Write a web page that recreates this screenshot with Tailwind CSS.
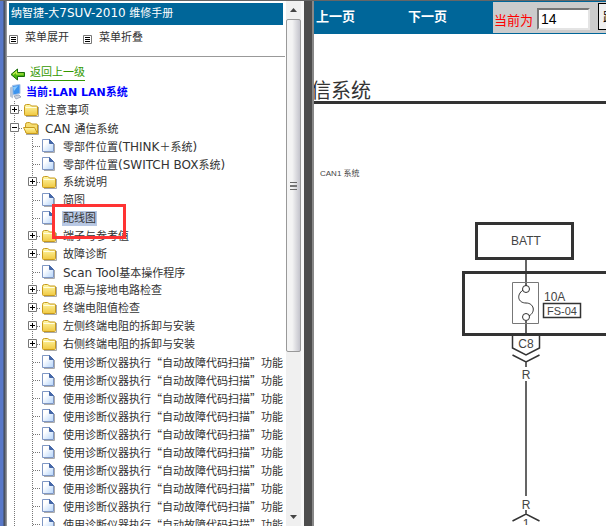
<!DOCTYPE html>
<html lang="zh-CN">
<head>
    <meta charset="UTF-8">
    <meta name="viewport" content="width=device-width, initial-scale=1.0">
    <title>维修手册</title>
    <script src="https://cdn.jsdelivr.net/npm/@tailwindcss/browser@4"></script>
</head>
<body class="bg-white text-[#333] font-['DejaVu_Sans','Noto_Sans_CJK_SC',sans-serif]">
    <!-- shared tree icons -->
    <svg width="0" height="0" class="absolute size-0">
        <defs>
            <linearGradient id="gold" x1="0" y1="0" x2="0" y2="1">
                <stop offset="0" stop-color="#fff8a8"/>
                <stop offset="1" stop-color="#f0c840"/>
            </linearGradient>
            <linearGradient id="paper" x1="0" y1="0" x2="1" y2="1">
                <stop offset="0.3" stop-color="#ffffff"/>
                <stop offset="1" stop-color="#b4d4fa"/>
            </linearGradient>
        </defs>
        <symbol id="folder" viewBox="0 0 18 18">
            <path d="M3 15.500h12.500V6" fill="none" stroke="#a9a9a9"/>
            <path d="M1.500 5.500q0-2 2-2h3q1 0 2 1.500h5q1 0 1 1v7.500q0 1-1 1h-11q-1 0-1-1z" fill="url(#gold)" stroke="#c79a1c"/>
            <path d="M2.500 6.500h11" stroke="#fffde0"/>
        </symbol>
        <symbol id="folder-open" viewBox="0 0 18 18">
            <path d="M3 15.500h12.500V6" fill="none" stroke="#a9a9a9"/>
            <path d="M2.500 13V5.500q0-2 2-2h2q1 0 2 1.500h5q1 0 1 1v8h-11z" fill="#f5dc70" stroke="#c79a1c"/>
            <path d="M0.500 8.500h11l3 6h-11z" fill="url(#gold)" stroke="#c79a1c"/>
        </symbol>
        <symbol id="page" viewBox="0 0 18 18">
            <path d="M3 15.500h10.500V7" fill="none" stroke="#aaa"/>
            <path d="M1.500 2.500h7l4 4v8h-11z" fill="url(#paper)" stroke="#7f97c4"/>
            <path d="M8.500 2.500v4h4z" fill="#4668a8" stroke="#4668a8"/>
        </symbol>
        <symbol id="line" viewBox="0 0 18 18">
            <path d="M9.500 0v18" stroke="#777" stroke-dasharray="1 1"/>
        </symbol>
        <symbol id="join" viewBox="0 0 18 18">
            <path d="M9.500 0v18M10 9.500h8" stroke="#777" stroke-dasharray="1 1"/>
        </symbol>
        <symbol id="plus" viewBox="0 0 18 18">
            <path d="M9.500 0v18M14 9.500h4" stroke="#777" stroke-dasharray="1 1"/>
            <path d="M5.500 4.500h8v8h-8z" fill="#fff" stroke="#777"/>
            <path d="M7 8.500h5M9.500 6v5" stroke="#000"/>
        </symbol>
        <symbol id="minus" viewBox="0 0 18 18">
            <path d="M9.500 0v18M14 9.500h4" stroke="#777" stroke-dasharray="1 1"/>
            <path d="M5.500 4.500h8v8h-8z" fill="#fff" stroke="#777"/>
            <path d="M7 8.500h5" stroke="#000"/>
        </symbol>
        <symbol id="list" viewBox="0 0 9 9">
            <path d="M.5.5h8v8h-8z" fill="#fff" stroke="#777"/>
            <path d="M2 2.500h5M2 4.500h5M2 6.500h5" stroke="#000"/>
        </symbol>
    </svg>

    <div class="flex h-screen overflow-hidden border-t border-[#666]">
        <div class="w-[7px] shrink-0 bg-linear-to-r from-[#5878c8] from-40% via-[#404858] via-60% to-[#aaa]"></div>

        <!-- contents frame -->
        <nav class="flex w-[297px] shrink-0">
            <div class="min-w-0 flex-1 overflow-hidden text-[11px] leading-[18px]">
                <h1 class="mt-[2px] mr-[3px] ml-[2px] h-[22px] bg-[#069] pl-[2px] leading-[21px] text-white">纳智捷<span class="text-[12px]">-</span>大<span class="text-[12px]">7SUV-2010</span> 维修手册</h1>
                <div class="mr-px flex h-[32px] gap-[14px] border-b border-[#999] pt-[4px] pl-[2px]">
                    <button class="flex h-[18px] items-center gap-[7px]"><svg class="mt-[3px] size-[9px]"><use href="#list"/></svg>菜单展开</button>
                    <button class="flex h-[18px] items-center gap-[7px]"><svg class="mt-[3px] size-[9px]"><use href="#list"/></svg>菜单折叠</button>
                </div>
                <div class="mt-[7px] flex h-[18px] items-center gap-[4px] pl-[3px]">
                    <svg class="mt-[3px] h-[13px] w-[16px]" viewBox="0 0 16 13">
                        <path d="M1 6.500 7.500 1v3.500h7v4h-7V12z" fill="#4db510" stroke="#176b08"/>
                        <path d="M3 6.500 6.500 3.500v2.500h7" fill="none" stroke="#c8f050" stroke-width="1.200"/>
                    </svg>
                    <a href="#" class="border-b border-[#390] leading-[15px] text-[#390]">返回上一级</a>
                </div>
                <div class="flex h-[19px] items-center gap-px pl-[2px]">
                    <svg class="size-[16px]" viewBox="0 0 16 16">
                        <path d="M1 3.500v9l3 2V2z" fill="#b8c4d4"/>
                        <path d="M3.500 1.500 11 .5v9L4 11z" fill="#3c94ee" stroke="#a9c3e6"/>
                        <path d="M4 3l5-1-4 5z" fill="#8cccfc"/>
                        <path d="M5 12l5-1 2 2-5 2z" fill="#ccd4e0" stroke="#8493ad" stroke-width=".7"/>
                    </svg>
                    <b class="pt-[2px] text-[#00f]">当前:LAN LAN系统</b>
                </div>
                <ul id="tree" class="-ml-[2px]"></ul>
            </div>
            <!-- scrollbar -->
            <div class="flex w-[15px] shrink-0 flex-col items-center bg-[#f0f0f0]">
                <svg class="h-[18px] w-[9px] shrink-0" viewBox="0 0 9 18"><path d="M1 11h7L4.500 7z" fill="#444"/></svg>
                <div class="flex h-[333px] w-full shrink-0 items-center justify-center rounded-xs border border-[#999] bg-linear-to-r from-[#f4f4f4] from-40% to-[#c4c4cc]">
                    <div class="h-[8px] w-[7px] border-y border-[#666] pt-[2px]"><div class="h-[2px] bg-[#777]"></div></div>
                </div>
                <svg class="mt-auto mb-[4px] h-[9px] w-[9px] shrink-0" viewBox="0 0 9 9"><path d="M1 2h7L4.500 6z" fill="#444"/></svg>
            </div>
            <div class="w-[3px] shrink-0 bg-[#f8f8f8]"></div>
        </nav>

        <div class="w-[10px] shrink-0 border-r-2 border-[#888] bg-[#4d4d4d]"></div>

        <!-- manual page frame -->
        <main class="min-w-0 flex-1 overflow-hidden">
            <div class="flex h-[33px] border-y border-[#069] bg-[#ccc] whitespace-nowrap">
                <div class="flex w-[179px] shrink-0 gap-[53px] bg-[#069] pl-[2px] text-[13px] leading-[30px] font-bold text-white">
                    <a href="#">上一页</a>
                    <a href="#">下一页</a>
                </div>
                <form class="flex shrink-0 items-start pl-px text-[13px]">
                    <label for="page-no" class="mr-[4px] pt-[9px] leading-[20px] text-[#f00]">当前为</label>
                    <input id="page-no" type="text" value="14" class="mt-[6px] h-[22px] w-[53px] border-2 border-t-[#777] border-r-[#e4e4e4] border-b-[#e4e4e4] border-l-[#777] bg-white pl-[2px] font-['Liberation_Sans',sans-serif] text-[14px] text-black">
                    <button type="button" class="mt-px ml-[8px] h-[27px] w-[36px] border border-black bg-[#f0f0f0] text-[13px] leading-[24px] text-black">跳转</button>
                </form>
            </div>
            <h2 class="-ml-[3px] mt-[43px] h-[27px] border-b-3 border-[#333] text-[20px] leading-[28px]">信系统</h2>
            <svg class="block h-[421px] w-[292px] max-w-none font-['Liberation_Sans','Noto_Sans_CJK_SC',sans-serif]" viewBox="314 105 292 421" fill="none" stroke="#333" stroke-width="1.500">
                <g fill="#444" stroke="none" font-size="12">
                    <text x="320" y="177" font-size="8">CAN1 系统</text>
                    <text x="526" y="246" text-anchor="middle">BATT</text>
                    <text x="544" y="302">10A</text>
                    <text x="562" y="316" text-anchor="middle" font-size="11">FS-04</text>
                    <text x="526" y="349" text-anchor="middle">C8</text>
                    <text x="526" y="380" text-anchor="middle">R</text>
                    <text x="526" y="510" text-anchor="middle">R</text>
                    <text x="526" y="529" text-anchor="middle">1</text>
                </g>
                <path d="M476.500 224.500h96v35h-96zM620 273.500H463.500v62H620" stroke-width="3"/>
                <path d="M526 261v26M526 322v13"/>
                <path d="M512.500 283.500h26v41h-26z" stroke="#777" stroke-width="1"/>
                <circle cx="526" cy="290" r="3.500" stroke-width="1"/>
                <circle cx="526" cy="318" r="3.500" stroke-width="1"/>
                <path d="M523 291C516 296 518 304 526 304S536 313 529 317" stroke-width="1"/>
                <path d="M543.500 304.500h37v14h-37z"/>
                <path d="M512.500 337v12l13.500 7 13.500-7v-12M512.500 356l13.500 7 13.500-7M526 363v5M526 382v115M526 511v4M512.500 522l13.500-7 13.500 7"/>
            </svg>
        </main>
    </div>

    <script>
        const scan = '使用诊断仪器执行“自动故障代码扫描”功能';
        const nodes = [
            ['零部件位置(THINK＋系统)', 'page'],
            ['零部件位置(SWITCH BOX系统)', 'page'],
            ['系统说明', 'folder'],
            ['简图', 'page'],
            ['配线图', 'page', true],
            ['端子与参考值', 'folder'],
            ['故障诊断', 'folder'],
            ['Scan Tool基本操作程序', 'page'],
            ['电源与接地电路检查', 'folder'],
            ['终端电阻值检查', 'folder'],
            ['左侧终端电阻的拆卸与安装', 'folder'],
            ['右侧终端电阻的拆卸与安装', 'folder'],
        ];
        for (let i = 0; i < 10; i++) nodes.push([scan, 'page']);

        // latin runs are set one size larger than the chinese text
        const latin = (text) => text.replace(/[()A-Za-z][()A-Za-z ]*/g, '<span class="text-[12px]">$&</span>');
        const icon = (name) => `<svg class="size-[18px] shrink-0"><use href="#${name}"/></svg>`;
        const row = (icons, label) => `<li class="relative flex h-[18px] whitespace-nowrap">${icons.map(icon).join('')}${label}</li>`;

        let html = row(['plus', 'folder'], '<a href="#" class="pt-px pl-[4px]">注意事项</a>');
        html += row(['minus', 'folder-open'], `<a href="#" class="pt-px pl-[4px]">${latin('CAN 通信系统')}</a>`);
        nodes.forEach(([text, type, selected]) => {
            let label = `<a href="#" class="pt-px pl-[4px]">${latin(text)}</a>`;
            if (text === scan) {
                label = `<a href="#" class="pl-[4px] font-['Noto_Sans_CJK_SC',sans-serif]">${text}</a>`;
            }
            if (selected) {
                label = `<a href="#" class="mt-[2px] ml-[3px] h-[15px] bg-[#b8c8e4] px-px leading-[16px]">${text}</a>
                    <span class="absolute -top-[5px] left-[47px] z-10 h-[35px] w-[74px] border-3 border-[#f33]"></span>`;
            }
            html += row(['line', type === 'folder' ? 'plus' : 'join', type], label);
        });
        document.getElementById('tree').innerHTML = html;
    </script>
</body>
</html>
